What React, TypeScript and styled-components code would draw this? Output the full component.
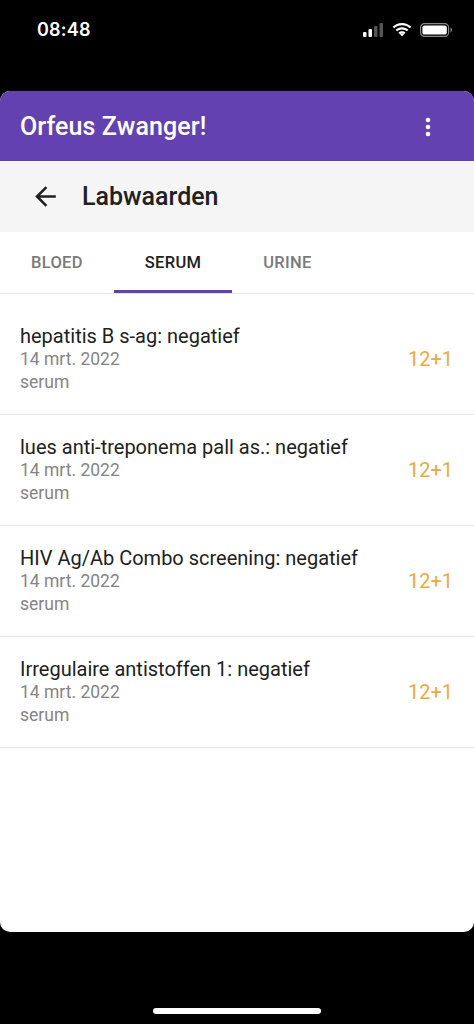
import styled, { createGlobalStyle } from 'styled-components'

const GlobalStyle = createGlobalStyle`
  html, body {
    margin: 0;
    padding: 0;
    background: #000;
    font-family: Roboto, 'Noto Sans', sans-serif;
  }
`

type Result = {
  title: string
  date: string
  material: string
  term: string
}

const results: Result[] = [
  { title: 'hepatitis B s-ag: negatief', date: '14 mrt. 2022', material: 'serum', term: '12+1' },
  { title: 'lues anti-treponema pall as.: negatief', date: '14 mrt. 2022', material: 'serum', term: '12+1' },
  { title: 'HIV Ag/Ab Combo screening: negatief', date: '14 mrt. 2022', material: 'serum', term: '12+1' },
  { title: 'Irregulaire antistoffen 1: negatief', date: '14 mrt. 2022', material: 'serum', term: '12+1' },
]

const tabs = ['BLOED', 'SERUM', 'URINE']

export default function App() {
  return (
    <Phone>
      <GlobalStyle />
      <StatusBar>
        <Time>08:48</Time>
        <StatusIcons>
          <svg width='21' height='14' viewBox='0 0 21 14'>
            <rect x='0' y='9' width='3.5' height='5' rx='1' fill='#fff' />
            <rect x='5.5' y='6' width='3.5' height='8' rx='1' fill='#fff' />
            <rect x='11' y='3' width='3.5' height='11' rx='1' fill='#555' />
            <rect x='16.5' y='0' width='3.5' height='14' rx='1' fill='#555' />
          </svg>
          <svg width='20' height='14' viewBox='0 0 20 14'>
            <path d='M10 2.2c3 0 5.8 1.2 7.8 3.1l1.5-1.5C16.9 1.5 13.6 0 10 0S3.1 1.5.7 3.8l1.5 1.5C4.2 3.4 7 2.2 10 2.2z' fill='#fff' />
            <path d='M10 6.4c1.9 0 3.6.7 4.9 1.9l1.5-1.5C14.7 5.2 12.5 4.2 10 4.2S5.3 5.2 3.6 6.8l1.5 1.5C6.4 7.1 8.1 6.4 10 6.4z' fill='#fff' />
            <path d='M10 10.4c.8 0 1.5.3 2 .8L10 13.4 8 11.2c.5-.5 1.2-.8 2-.8z' fill='#fff' />
            <path d='M10 8.3c1.4 0 2.6.5 3.5 1.4L12 11.2c-.5-.5-1.200-.8-2-.8s-1.5.3-2 .8L6.5 9.7C7.4 8.8 8.6 8.3 10 8.3z' fill='#fff' />
          </svg>
          <svg width='33' height='14' viewBox='0 0 33 14'>
            <rect x='0.6' y='0.6' width='28' height='12.8' rx='3.8' fill='none' stroke='#888' strokeWidth='1.2' />
            <rect x='2.4' y='2.4' width='24.4' height='9.2' rx='2.2' fill='#fff' />
            <path d='M30.5 4.6v4.8c.9-.3 1.5-1.3 1.5-2.4s-.6-2.1-1.5-2.4z' fill='#888' />
          </svg>
        </StatusIcons>
      </StatusBar>

      <Sheet>
        <AppBar>
          <AppTitle>Orfeus Zwanger!</AppTitle>
          <MenuButton aria-label='menu'>
            <svg width='6' height='20' viewBox='0 0 6 20'>
              <circle cx='3' cy='3' r='2.3' fill='#fff' />
              <circle cx='3' cy='10' r='2.3' fill='#fff' />
              <circle cx='3' cy='17' r='2.3' fill='#fff' />
            </svg>
          </MenuButton>
        </AppBar>

        <Toolbar>
          <BackButton aria-label='terug'>
            <svg width='31' height='31' viewBox='0 0 24 24'>
              <path d='M20 11H7.83l5.59-5.59L12 4l-8 8 8 8 1.41-1.41L7.83 13H20v-2z' fill='#212121' />
            </svg>
          </BackButton>
          <PageTitle>Labwaarden</PageTitle>
        </Toolbar>

        <TabBar>
          {tabs.map((t) => (
            <Tab key={t} $active={t === 'SERUM'}>
              {t}
            </Tab>
          ))}
        </TabBar>

        <List>
          {results.map((r) => (
            <Row key={r.title}>
              <RowText>
                <RowTitle>{r.title}</RowTitle>
                <RowSub>{r.date}</RowSub>
                <RowSub>{r.material}</RowSub>
              </RowText>
              <Term>{r.term}</Term>
            </Row>
          ))}
        </List>
      </Sheet>

      <HomeArea>
        <HomeIndicator />
      </HomeArea>
    </Phone>
  )
}

const Phone = styled.div`
  width: 474px;
  height: 1024px;
  display: flex;
  flex-direction: column;
  background: #000;
  overflow: hidden;
`

const StatusBar = styled.div`
  height: 91px;
  flex: 0 0 91px;
  display: flex;
  align-items: flex-start;
  justify-content: space-between;
  padding: 19px 21px 0 37px;
  box-sizing: border-box;
`

const Time = styled.div`
  color: #fff;
  font-family: Inter, 'Noto Sans', sans-serif;
  font-weight: 600;
  font-size: 18px;
  line-height: 22px;
  letter-spacing: 0.2px;
`

const StatusIcons = styled.div`
  display: flex;
  align-items: center;
  gap: 8px;
  margin-top: 4px;
`

const Sheet = styled.div`
  flex: 0 0 841px;
  background: #fff;
  border-radius: 10px;
  overflow: hidden;
  display: flex;
  flex-direction: column;
`

const AppBar = styled.header`
  height: 70px;
  flex: 0 0 70px;
  background: #6441b0;
  display: flex;
  align-items: center;
  justify-content: space-between;
  padding: 0 43px 0 20px;
`

const AppTitle = styled.h1`
  margin: 0;
  color: #fff;
  font-size: 25px;
  font-weight: 500;
  letter-spacing: 0.1px;
`

const MenuButton = styled.button`
  border: 0;
  background: none;
  padding: 0;
  display: flex;
  margin-top: 2px;
`

const Toolbar = styled.div`
  height: 71px;
  flex: 0 0 71px;
  background: #f5f5f5;
  display: flex;
  align-items: center;
  padding: 0 0 0 30px;
  gap: 21px;
`

const BackButton = styled.button`
  border: 0;
  background: none;
  padding: 0;
  display: flex;
`

const PageTitle = styled.h2`
  margin: 0;
  font-size: 25px;
  font-weight: 500;
  color: #212121;
`

const TabBar = styled.nav`
  height: 62px;
  flex: 0 0 62px;
  display: flex;
  border-bottom: 1px solid #e3e3e3;
  box-sizing: border-box;
`

const Tab = styled.div<{ $active?: boolean }>`
  display: flex;
  align-items: center;
  padding: 3px 31px 0;
  font-size: 16.5px;
  font-weight: 500;
  letter-spacing: 0.3px;
  color: ${(p) => (p.$active ? '#212121' : '#7a7a7a')};
  border-bottom: 3px solid ${(p) => (p.$active ? '#6441b0' : 'transparent')};
`

const List = styled.div`
  display: flex;
  flex-direction: column;
  padding-top: 10px;
`

const Row = styled.div`
  height: 111px;
  display: flex;
  align-items: center;
  justify-content: space-between;
  padding: 0 21px 0 20px;
  border-bottom: 1px solid #e6e6e6;
  box-sizing: border-box;
`

const RowText = styled.div`
  display: flex;
  flex-direction: column;
`

const RowTitle = styled.div`
  font-size: 20px;
  line-height: 24px;
  color: #212121;
`

const RowSub = styled.div`
  font-size: 17.5px;
  line-height: 23px;
  color: #858585;
`

const Term = styled.div`
  font-size: 20px;
  color: #f0a83a;
`

const HomeArea = styled.div`
  flex: 1;
  display: flex;
  justify-content: center;
  align-items: flex-end;
  padding-bottom: 10px;
`

const HomeIndicator = styled.div`
  width: 168px;
  height: 6px;
  border-radius: 3px;
  background: #fff;
`
